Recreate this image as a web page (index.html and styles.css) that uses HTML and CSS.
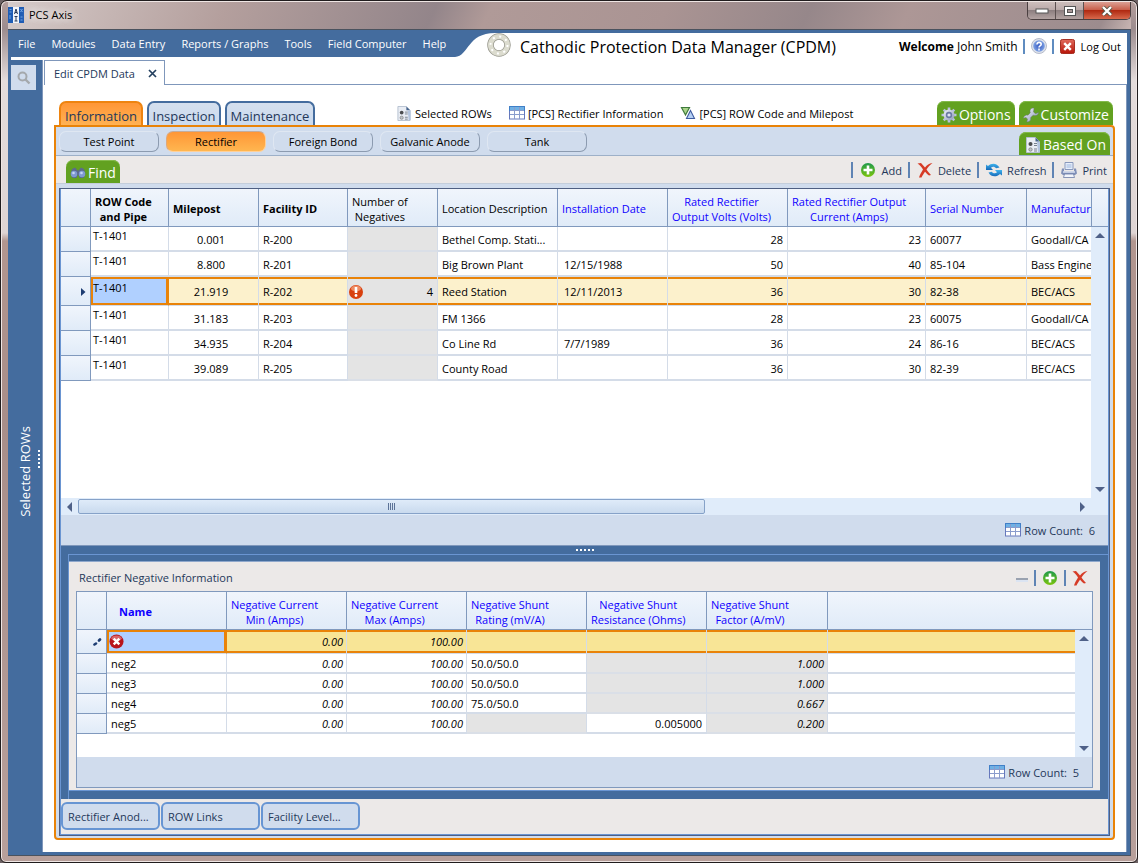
FILE: index.html
```html
<!DOCTYPE html>
<html lang="en">
<head>
<meta charset="utf-8">
<title>PCS Axis</title>
<link rel="stylesheet" href="styles.css">
</head>
<body>
<svg class="defs" aria-hidden="true">
  <defs>
    <linearGradient id="g-green" x1="0" y1="0" x2="0" y2="1"><stop offset="0" stop-color="#1f9a4c"/><stop offset="1" stop-color="#7cc40c"/></linearGradient>
    <linearGradient id="g-blue" x1="0" y1="0" x2="0" y2="1"><stop offset="0" stop-color="#3fb4ee"/><stop offset="1" stop-color="#1568b8"/></linearGradient>
    <linearGradient id="g-steel" x1="0" y1="0" x2="1" y2="1"><stop offset="0" stop-color="#f2f4fa"/><stop offset="1" stop-color="#8c98b8"/></linearGradient>
    <linearGradient id="g-red" x1="0" y1="0" x2="0" y2="1"><stop offset="0" stop-color="#e06a5c"/><stop offset="1" stop-color="#b81408"/></linearGradient>
    <radialGradient id="g-help"><stop offset="0" stop-color="#3558c0"/><stop offset="1" stop-color="#7ea2e4"/></radialGradient>
  </defs>
  <symbol id="i-table" viewBox="0 0 16 14"><rect x=".5" y=".5" width="15" height="12.500" fill="#fff" stroke="#6678bc"/><rect x="1" y="1" width="14" height="3.500" fill="#6fb0e4"/><path d="M1 4.500h14M1 8.500h14M5.500 1v12M10.500 1v12" stroke="#8a9ccc" fill="none"/><path d="M.5 5V.5h15V5" stroke="#3f80c8" fill="none"/></symbol>
  <symbol id="i-doc" viewBox="0 0 16 16"><path d="M1.500 .5h9l4 4v11h-13z" fill="#e9edf4" stroke="#b4bfd0"/><path d="M10.500 .5v4h4z" fill="#46648c"/><path d="M12 5h3v10h-2z" fill="#b2c4de"/><circle cx="5.500" cy="7" r="2" fill="#4a4c4e"/><circle cx="5.500" cy="12.500" r="1.700" fill="#bfc4c8" stroke="#777" stroke-width=".7"/><path d="M9 6.500h3M9 8.500h3M9 12h3M9 14h3" stroke="#78828e"/></symbol>
  <symbol id="i-tri" viewBox="0 0 16 14"><path d="M1.500 1.500h8L5.500 9z" fill="#a9d48a" stroke="#3f7a3c" stroke-width="1.200"/><path d="M10.500 4.500L14.500 12.500H6.500z" fill="#b6d0f4" stroke="#3f5ca0" stroke-width="1.100"/></symbol>
  <symbol id="i-gear" viewBox="0 0 16 16"><path d="M8 .5v15M.5 8h15M2.700 2.700l10.600 10.600M13.300 2.700L2.700 13.300" stroke="#b9c2dc" stroke-width="2.600"/><circle cx="8" cy="8" r="5.500" fill="url(#g-steel)"/><circle cx="8" cy="8" r="3.200" fill="#6b7aa4"/><circle cx="8" cy="8" r="1.600" fill="#dfe4f2"/></symbol>
  <symbol id="i-wrench" viewBox="0 0 16 16"><path d="M15.500 5.500l-3 1.200-2-1.700.6-3.800C8 .5 6.300 3 7.300 5.700L5 8.200C3 7.500.5 9 .5 11.300l2.300-.9 1.700 1.500-.7 3c2.800.3 4.500-1.700 3.900-4.400L10.200 8.200c3 .9 5.300-.3 5.300-2.700z" fill="url(#g-steel)" stroke="#68766a" stroke-width=".5"/></symbol>
  <symbol id="i-find" viewBox="0 0 16 12"><path d="M2 2l3-1.500 2.500 3h1L11 .5 14 2l1.500 5-2 4h-4L8 7.500 6.500 11h-4L.5 7z" fill="#5b6a8e"/><circle cx="4" cy="7" r="3.200" fill="#7f9ad2"/><circle cx="12" cy="7" r="3.200" fill="#7f9ad2"/><circle cx="3.500" cy="6" r="1.300" fill="#c6d6f4"/><circle cx="11.500" cy="6" r="1.300" fill="#c6d6f4"/></symbol>
  <symbol id="i-add" viewBox="0 0 16 16"><circle cx="8" cy="8" r="7" fill="url(#g-green)"/><path d="M8 3.500v9M3.500 8h9" stroke="#fff" stroke-width="2.600"/></symbol>
  <symbol id="i-del" viewBox="0 0 16 16"><path d="M.5 1.500L4 1c1.500 1.500 2.500 3 4 4.500C10 3 12 1.500 15.500 1 13 2.800 11 5 9.500 7.500c1.500 2 2.500 3.500 4.500 5.500l-2 .5C10 12 9 10.800 8 9.800 6.500 12 5.500 13.500 4.500 15.500H2C3 12.500 4.500 10 6 7.500 4.500 5 3 3 .5 1.500z" fill="#d63b26"/></symbol>
  <symbol id="i-refresh" viewBox="0 0 16 16"><path d="M0 2.500l2 1.500C5.500.5 11 .8 13.500 5.500l-3.200 .8C8.500 4.300 6.500 4.300 5 5.700L7 8H0z" fill="url(#g-blue)"/><path d="M16 13.500l-2-1.500C10.500 15.500 5 15.200 2.500 10.500l3.200-.8c1.800 2 3.800 2 5.300.6L9 8h7z" fill="url(#g-blue)"/></symbol>
  <symbol id="i-print" viewBox="0 0 16 16"><path d="M4 .5h8v7H4z" fill="#e7eefa" stroke="#8898bc"/><path d="M1 6.500h2v3h10v-3h2l1 5-2 1.500H2L0 11.500z" fill="#8090b8"/><path d="M2 10h12" stroke="#d9e0f0" stroke-width="1.500"/><path d="M3.500 12h9l1 3.500h-11z" fill="#f1f4fb" stroke="#6c7ca6" stroke-width=".8"/><path d="M5.500 3h5M5.500 5h5" stroke="#9db6de"/></symbol>
  <symbol id="i-search" viewBox="0 0 14 14"><circle cx="5.500" cy="5.500" r="4" fill="none" stroke="#a4a8ac" stroke-width="2"/><path d="M8.500 8.500l4 4" stroke="#a4a8ac" stroke-width="2.400"/></symbol>
</svg>

<div class="window">
  <header class="titlebar">
    <svg class="app-icon" viewBox="0 0 16 16" aria-hidden="true"><rect width="16" height="16" fill="#1f5cb4"/><rect x="5" width="6" height="16" fill="#f3f6fb"/><path d="M1.500 2.500h2M1.500 5h2M2 8v4M12.500 2l2 3M14.500 2l-2 3M12.500 10h2M12.500 13h2" stroke="#6fa4e4"/><path d="M6.500 7L8 2l1.500 5M7 5.500h2M8 9v5M6.500 9.500h3M6.500 14h3" stroke="#2a3c5c" fill="none"/></svg>
    <span class="app-name">PCS Axis</span>
    <div class="win-buttons">
      <button class="win-btn" aria-label="Minimize"><svg width="14" height="8" viewBox="0 0 14 8"><rect x="1" y="2" width="12" height="4" fill="#fff" stroke="#555"/></svg></button>
      <button class="win-btn" aria-label="Maximize"><svg width="12" height="10" viewBox="0 0 12 10"><rect x=".5" y=".5" width="11" height="9" fill="#fff" stroke="#555"/><rect x="3.500" y="3.500" width="5" height="3" fill="#a99" stroke="#555"/></svg></button>
      <button class="win-btn win-close" aria-label="Close"><svg width="12" height="10" viewBox="0 0 12 10"><path d="M2 1l8 8M10 1L2 9" stroke="#554" stroke-width="4"/><path d="M2 1l8 8M10 1L2 9" stroke="#fff" stroke-width="2.400"/></svg></button>
    </div>
  </header>

  <div class="client">
    <div class="masthead">
      <nav class="menu">
        <a href="#">File</a><a href="#">Modules</a><a href="#">Data Entry</a><a href="#">Reports / Graphs</a><a href="#">Tools</a><a href="#">Field Computer</a><a href="#">Help</a>
      </nav>
      <svg class="swoosh" viewBox="0 0 40 24" aria-hidden="true"><path d="M0 0h40C12 0 14 23 0 24z" fill="#446c9e"/></svg>
      <svg class="ring" viewBox="0 0 24 24" aria-hidden="true"><circle cx="12" cy="12" r="8.500" fill="none" stroke="#96968c" stroke-width="6.500"/><circle cx="12" cy="12" r="8.500" fill="none" stroke="#dcdccf" stroke-width="5"/><circle cx="12" cy="12" r="8.500" fill="none" stroke="#fff" stroke-width="2" stroke-dasharray="2 4.675"/></svg>
      <h1>Cathodic Protection Data Manager (CPDM)</h1>
      <div class="account">
        <span><b>Welcome</b> John Smith</span>
        <button class="help" aria-label="Help"><svg width="16" height="16" viewBox="0 0 16 16"><circle cx="8" cy="8" r="7.500" fill="#dfe3ec" stroke="#b6bccb"/><circle cx="8" cy="8" r="5.800" fill="url(#g-help)"/><path d="M6 6.500c0-3 4.200-2.600 4.200-.2C10.200 8 8 7.800 8 9.500M8 10.500v2" fill="none" stroke="#fff" stroke-width="1.600"/></svg></button>
        <button class="logout"><svg width="15" height="15" viewBox="0 0 16 16"><rect x=".5" y=".5" width="15" height="15" rx="2" fill="url(#g-red)" stroke="#a02418"/><path d="M4.500 4.500l7 7M11.500 4.500l-7 7" stroke="#fff" stroke-width="2.600"/></svg>Log Out</button>
      </div>
    </div>

    <div class="workspace">
      <aside class="sidebar">
        <button class="side-search" aria-label="Search"><svg width="14" height="14"><use href="#i-search"/></svg></button>
        <div class="side-label"><span class="vertical">Selected ROWs</span><i class="grip-v"></i></div>
      </aside>

      <main class="document">
        <div class="doc-tabs">
          <div class="doc-tab">Edit CPDM Data <button aria-label="Close tab"><svg width="9" height="9" viewBox="0 0 9 9"><path d="M1 1l7 7M8 1L1 8" stroke="#24405f" stroke-width="1.700"/></svg></button></div>
          <div class="doc-line"></div>
        </div>
        <div class="doc-page">
          <div class="section-tabs">
            <button class="stab active w84">Information</button>
            <button class="stab w74">Inspection</button>
            <button class="stab w90">Maintenance</button>
            <div class="filters">
              <a href="#"><svg width="16" height="15"><use href="#i-doc"/></svg>Selected ROWs</a>
              <a href="#"><svg width="16" height="14"><use href="#i-table"/></svg>[PCS] Rectifier Information</a>
              <a href="#"><svg width="16" height="14"><use href="#i-tri"/></svg>[PCS] ROW Code and Milepost</a>
            </div>
            <button class="gtab"><svg width="16" height="16"><use href="#i-gear"/></svg>Options</button>
            <button class="gtab"><svg width="16" height="16"><use href="#i-wrench"/></svg>Customize</button>
          </div>

          <div class="panel">
            <div class="sub-tabs">
              <button class="pill">Test Point</button>
              <button class="pill active">Rectifier</button>
              <button class="pill">Foreign Bond</button>
              <button class="pill">Galvanic Anode</button>
              <button class="pill">Tank</button>
              <button class="gtab based"><svg width="16" height="16"><use href="#i-doc"/></svg>Based On</button>
            </div>
            <div class="toolbar">
              <button class="gtab find"><svg width="16" height="12"><use href="#i-find"/></svg>Find</button>
              <div class="actions">
                <button><svg width="16" height="16"><use href="#i-add"/></svg>Add</button>
                <button><svg width="16" height="16"><use href="#i-del"/></svg>Delete</button>
                <button><svg width="16" height="16"><use href="#i-refresh"/></svg>Refresh</button>
                <button><svg width="16" height="16"><use href="#i-print"/></svg>Print</button>
              </div>
            </div>

            <div class="frame"><div class="frame-inner">
              <section class="grid main-grid">
                <div class="grid-view">
                  <div class="grid-clip">
                    <table class="data">
                      <colgroup><col class="c30"><col class="c78"><col class="c90"><col class="c89"><col class="c90"><col class="c120"><col class="c110"><col class="c120"><col class="c138"><col class="c101"><col></colgroup>
                      <thead><tr><th></th><th class="b"><span>ROW Code<br>and Pipe</span></th><th class="b">Milepost</th><th class="b">Facility ID</th><th><span>Number of<br>Negatives</span></th><th>Location Description</th><th class="opt">Installation Date</th><th class="opt"><span>Rated Rectifier<br>Output Volts (Volts)</span></th><th class="opt"><span>Rated Rectifier Output<br>Current (Amps)</span></th><th class="opt">Serial Number</th><th class="opt last">Manufactur</th></tr></thead>
                      <tbody>
                        <tr><th></th><td class="top">T-1401</td><td class="mp">0.001</td><td>R-200</td><td class="off"></td><td>Bethel Comp. Stati...</td><td></td><td class="num">28</td><td class="num">23</td><td class="tight">60077</td><td class="last">Goodall/CA</td></tr>
                        <tr><th></th><td class="top">T-1401</td><td class="mp">8.800</td><td>R-201</td><td class="off"></td><td>Big Brown Plant</td><td class="date">12/15/1988</td><td class="num">50</td><td class="num">40</td><td class="tight">85-104</td><td class="last">Bass Engine</td></tr>
                        <tr class="sel"><th><svg width="5" height="8" viewBox="0 0 5 8"><path d="M0 0l4.500 4L0 8z" fill="#1d3d72"/></svg></th><td class="top cur">T-1401</td><td class="mp">21.919</td><td>R-202</td><td class="off num"><div class="warn"><svg width="16" height="16" viewBox="0 0 16 16"><circle cx="8" cy="8" r="7" fill="#d8400e"/><ellipse cx="8" cy="4.500" rx="5" ry="3" fill="#ee8a62"/><path d="M8 3v6" stroke="#fff" stroke-width="2.600"/><circle cx="8" cy="11.500" r="1.400" fill="#fff"/></svg><span>4</span></div></td><td>Reed Station</td><td class="date">12/11/2013</td><td class="num">36</td><td class="num">30</td><td class="tight">82-38</td><td class="last">BEC/ACS</td></tr>
                        <tr><th></th><td class="top">T-1401</td><td class="mp">31.183</td><td>R-203</td><td class="off"></td><td>FM 1366</td><td></td><td class="num">28</td><td class="num">23</td><td class="tight">60075</td><td class="last">Goodall/CA</td></tr>
                        <tr><th></th><td class="top">T-1401</td><td class="mp">34.935</td><td>R-204</td><td class="off"></td><td>Co Line Rd</td><td class="date">7/7/1989</td><td class="num">36</td><td class="num">24</td><td class="tight">86-16</td><td class="last">BEC/ACS</td></tr>
                        <tr><th></th><td class="top">T-1401</td><td class="mp">39.089</td><td>R-205</td><td class="off"></td><td>County Road</td><td></td><td class="num">36</td><td class="num">30</td><td class="tight">82-39</td><td class="last">BEC/ACS</td></tr>
                      </tbody>
                    </table>
                  </div>
                  <div class="vside"><div class="corner"></div><div class="vscroll"><i class="arr up"></i><i class="arr down"></i></div></div>
                </div>
                <div class="hscroll"><i class="arr left"></i><div class="track"><div class="thumb"><i></i></div></div><i class="arr right"></i></div>
                <footer class="count"><svg width="16" height="14"><use href="#i-table"/></svg>Row Count: &nbsp;6</footer>
              </section>

              <div class="splitter"><i></i></div>

              <div class="detail-wrap"><section class="detail">
                <div class="detail-head">
                  <h2>Rectifier Negative Information</h2>
                  <div class="detail-tools">
                    <button aria-label="Collapse"><svg width="12" height="16" viewBox="0 0 12 16"><path d="M0 9h12" stroke="#9aa2b0" stroke-width="2"/><path d="M0 11h12" stroke="#dbe4f2" stroke-width="2"/></svg></button>
                    <button aria-label="Add"><svg width="16" height="16"><use href="#i-add"/></svg></button>
                    <button aria-label="Delete"><svg width="16" height="16"><use href="#i-del"/></svg></button>
                  </div>
                </div>
                <div class="grid sub-grid">
                  <div class="sub-view">
                    <div class="grid-clip">
                      <table class="data small">
                        <colgroup><col class="c30"><col class="c120"><col class="c120"><col class="c120"><col class="c120"><col class="c120"><col class="c121"><col></colgroup>
                        <thead><tr><th></th><th class="b opt name">Name</th><th class="opt"><span>Negative Current<br>Min (Amps)</span></th><th class="opt"><span>Negative Current<br>Max (Amps)</span></th><th class="opt"><span>Negative Shunt<br>Rating (mV/A)</span></th><th class="opt"><span>Negative Shunt<br>Resistance (Ohms)</span></th><th class="opt"><span>Negative Shunt<br>Factor (A/mV)</span></th><th class="fill"></th></tr></thead>
                        <tbody>
                          <tr class="sel edit"><th><svg width="9" height="9" viewBox="0 0 9 9"><path d="M1.500 7.500l1.500-1M6 3.500l1-1" stroke="#1d3d72" stroke-width="2.600" stroke-linecap="round"/></svg></th><td class="cur err"><svg width="15" height="15" viewBox="0 0 16 16"><circle cx="8" cy="8" r="7.500" fill="#b8141c"/><ellipse cx="8" cy="4.500" rx="5.500" ry="3" fill="#d8646a"/><path d="M5 5l6 6M11 5l-6 6" stroke="#fff" stroke-width="2.600"/></svg></td><td class="num it">0.00</td><td class="num it">100.00</td><td></td><td></td><td></td><td class="fill"></td></tr>
                          <tr><th></th><td>neg2</td><td class="num it">0.00</td><td class="num it">100.00</td><td class="tight">50.0/50.0</td><td class="off"></td><td class="off num it">1.000</td><td class="fill"></td></tr>
                          <tr><th></th><td>neg3</td><td class="num it">0.00</td><td class="num it">100.00</td><td class="tight">50.0/50.0</td><td class="off"></td><td class="off num it">1.000</td><td class="fill"></td></tr>
                          <tr><th></th><td>neg4</td><td class="num it">0.00</td><td class="num it">100.00</td><td class="tight">75.0/50.0</td><td class="off"></td><td class="off num it">0.667</td><td class="fill"></td></tr>
                          <tr><th></th><td>neg5</td><td class="num it">0.00</td><td class="num it">100.00</td><td class="off"></td><td class="num">0.005000</td><td class="off num it">0.200</td><td class="fill"></td></tr>
                        </tbody>
                      </table>
                    </div>
                    <div class="vside"><div class="corner plain"></div><div class="vscroll"><i class="arr up"></i><i class="arr down"></i></div></div>
                  </div>
                  <footer class="count"><svg width="16" height="14"><use href="#i-table"/></svg>Row Count: &nbsp;5</footer>
                </div>
              </section></div>

              <div class="bottom-tabs">
                <button>Rectifier Anod...</button>
                <button>ROW Links</button>
                <button>Facility Level...</button>
              </div>
            </div></div>
          </div>
        </div>
      </main>
    </div>
  </div>
</div>
</body>
</html>
```

FILE: styles.css
```css
:root {
  --blue: #446c9e;
  --line: #8099bd;
  --pale: #d0dced;
  --orange: #e98308;
  --ink: #24385a;
  --grey: #ece9e8;
  --green: #62a120;
  --scroll: #e0ecfa;
}

* { box-sizing: border-box; }

body {
  margin: 0;
  font: 11px/15px "Open Sans", "Noto Sans", sans-serif;
  color: #000;
  background: #6d6264;
}

button {
  font: inherit;
  color: inherit;
  background: none;
  border: 0;
  padding: 0;
  display: flex;
  align-items: center;
  justify-content: center;
}

a { color: inherit; text-decoration: none; }
svg { flex: none; display: block; }
.defs { position: absolute; width: 0; height: 0; }

/* Window chrome */
.window {
  min-height: 100vh;
  display: flex;
  flex-direction: column;
  padding: 0 6px 6px 7px;
  border: 1px solid #201c1d;
  border-radius: 7px 7px 6px 6px;
  background: linear-gradient(180deg, #b49e9c 0, #9c8c8e 28px, #e4dcdb 80px, #ded4d3 232px, #b2968f 240px, #a88e89 420px, #b8a09b 100%);
  box-shadow: inset 0 0 0 1px #efe6e4;
}

.titlebar {
  height: 28px;
  display: flex;
  align-items: flex-start;
  gap: 5px;
  background: linear-gradient(115deg, #d6cccb 0, #cbbdbb 60px, #b49f9d 200px, #93858a 390px, #b09a98 440px, #aa9493 600px, #96878a 730px, #ad9796 820px, #9c8c8e 1000px, #c9b6b3 100%);
  margin-top: 1px;
  margin-bottom: -1px;
}
.app-icon { width: 16px; height: 16px; margin-top: 5px; }
.app-name { margin-top: 5px; text-shadow: 0 0 8px #fff, 0 0 8px #fff; }
.win-buttons {
  margin-left: auto;
  display: flex;
  border: 1px solid #4a3f40;
  border-top: 0;
  border-radius: 0 0 5px 5px;
  overflow: hidden;
}
.win-btn {
  width: 28px;
  height: 17px;
  border-right: 1px solid #5b5050;
  background: linear-gradient(#cdbebc, #b8a7a6 50%, #8d7f80 50%, #b3a3a2);
}
.win-close { width: 46px; border-right: 0; background: linear-gradient(#dca094, #c9604c 45%, #b02a12 50%, #d8694c); }

.client {
  flex: 1;
  display: flex;
  flex-direction: column;
  background: var(--blue);
  padding: 3px 3px 3px 0;
  border: 1px solid #4a525e;
  border-width: 1px 1px 1px 0;
}

.masthead {
  display: flex;
  height: 27px;
  margin-left: 3px;
  background: #fff;
}
.menu {
  display: flex;
  align-items: center;
  gap: 16px;
  height: 24px;
  width: 444px;
  padding: 0 0 3px 7px;
  background: var(--blue);
  color: #fff;
  white-space: nowrap;
}
.swoosh { width: 40px; height: 24px; }
.ring { width: 24px; height: 24px; margin-left: -8px; }
.masthead h1 { margin: 4px 0 0 9px; font-size: 16px; line-height: 20px; font-weight: 400; white-space: nowrap; }
.account { margin-left: auto; display: flex; align-items: center; height: 26px; padding-right: 6px; white-space: nowrap; }
.account span { font-size: 12px; }
.account button { border-left: 2px solid #5f8cc0; height: 15px; padding-left: 6px; margin-left: 5px; }
.account .logout { gap: 6px; }

.workspace { flex: 1; display: flex; }
.sidebar { width: 35px; display: flex; flex-direction: column; padding: 5px 0 0 3px; border-right: 1px solid #7f97bb; color: #fff; }
.side-search { width: 25px; height: 25px; background: var(--pale); }
.side-label { flex: 1; display: flex; align-items: center; padding-left: 6px; gap: 4px; }
.vertical { writing-mode: vertical-rl; transform: rotate(180deg); font-size: 13px; line-height: 17px; }
.grip-v { width: 2px; height: 19px; margin-bottom: 24px; background: repeating-linear-gradient(#fff 0 2px, transparent 2px 4px); }

/* Document */
.document { flex: 1; min-width: 0; display: flex; flex-direction: column; background: #fff; }
.doc-tabs { display: flex; height: 25px; padding-left: 1px; }
.doc-tab {
  width: 121px;
  display: flex;
  align-items: center;
  justify-content: space-between;
  padding: 0 7px 0 9px;
  border: 1px solid #7f97bb;
  border-bottom: 0;
  color: var(--ink);
}
.doc-line { flex: 1; border-bottom: 1px solid #7f97bb; }
.doc-page { flex: 1; display: flex; flex-direction: column; padding: 16px 11px 12px; border-right: 1px solid #7f97bb; }

.section-tabs { display: flex; gap: 4px; height: 24px; padding: 0 2px 0 5px; }
.stab {
  border: 2px solid #446c9e;
  border-bottom: 0;
  border-radius: 7px 7px 0 0;
  background: linear-gradient(#d4dfee, #cbdaee);
  color: var(--ink);
  font-size: 13px;
  line-height: 20px;
  padding-top: 3px;
  white-space: nowrap;
}
.stab.active { border-color: #ee8410; background: linear-gradient(#ff9636, #ffb254); }
.w84 { width: 84px; }
.w74 { width: 74px; }
.w90 { width: 90px; }
.filters { display: flex; flex: 1; gap: 17px; padding-left: 77px; white-space: nowrap; }
.filters a { display: flex; align-items: center; gap: 3px; }
.gtab {
  display: flex;
  gap: 2px;
  padding: 3px 4px 0;
  border-radius: 7px 7px 0 0;
  background: var(--green);
  box-shadow: inset 0 1px 0 #84bb4c;
  color: #fff;
  font-size: 14px;
  line-height: 20px;
  white-space: nowrap;
}

.panel {
  flex: 1;
  display: flex;
  flex-direction: column;
  border: 2px solid var(--orange);
  border-radius: 0 4px 4px 4px;
  background: var(--pale);
  padding-bottom: 2px;
}
.sub-tabs { display: flex; gap: 7px; height: 29px; padding: 4px 3px 0; border-bottom: 1px solid #9db0c8; }
.pill {
  width: 100px;
  height: 21px;
  border: 1px solid #dfe7f2;
  border-right-color: #8c9bb0;
  border-bottom-color: #8c9bb0;
  border-radius: 7px;
}
.pill.active { background: linear-gradient(#ff9636, #ffb650); border-color: #c4ac9c #ffd098 #ffd098 #e0a878; }
.based { margin: 1px 0 0 auto; padding: 2px 4px 0 6px; }

.toolbar { display: flex; justify-content: space-between; height: 28px; padding: 4px 6px 0 10px; background: var(--grey); border-bottom: 1px solid #c4cedb; }
.find { padding: 2px 4px 0; }
.actions { display: flex; align-items: center; height: 20px; gap: 6px; color: var(--ink); }
.actions button { height: 16px; gap: 5px; padding-left: 7px; border-left: 2px solid #5f84b4; }

.frame { flex: 1; display: flex; margin: 4px 3px 0; border: 1px solid #4f5f82; }
.frame-inner { flex: 1; min-width: 0; display: flex; flex-direction: column; border: 1px solid #6a95d2; border-top: 0; background: var(--blue); }

/* Data grids */
.grid { display: flex; flex-direction: column; background: #fff; }
.main-grid { flex: 1; border-bottom: 1px solid #7f97bb; }
.grid-view { flex: 1; display: flex; min-height: 0; }
.sub-view { display: flex; min-height: 165px; }
.grid-clip { flex: 1; min-width: 0; overflow: hidden; }
.data { width: 100%; table-layout: fixed; border-collapse: separate; border-spacing: 0; }
.c30 { width: 30px; }
.c78 { width: 78px; }
.c89 { width: 89px; }
.c90 { width: 90px; }
.c101 { width: 101px; }
.c110 { width: 110px; }
.c120 { width: 120px; }
.c121 { width: 121px; }
.c138 { width: 138px; }

.data th, .data td {
  height: 25px;
  padding: 1px 4px 0;
  white-space: nowrap;
  text-align: left;
  font-weight: 400;
  border-right: 1px solid #d4dce8;
  border-bottom: 2px solid #d4dce8;
}
.data th {
  border-right: 1px solid var(--line);
  border-bottom: 1px solid var(--line);
  background: linear-gradient(#f0f5fc, #e0ebf8);
}
.data thead th { height: 38px; padding: 2px 4px 0; }
.data thead span { display: inline-block; text-align: center; vertical-align: top; }
.data thead .b { font-weight: 700; }
.data .opt { color: #0f00ff; }
.data thead .name { padding-left: 12px; }
.data .last { border-right: 0; }
.data td.top { vertical-align: top; padding: 1px 2px 0; }
.data td.mp { text-align: center; padding-right: 9px; }
.data td.num { text-align: right; }
.data td.off { background: #e4e4e4; border-bottom-color: #dadfe7; }
.data td.date { padding-left: 6px; }
.data td.it { font-style: italic; padding-right: 3px; }
.data .sel th svg { margin-left: auto; }
.data .sel td {
  height: 29px;
  background: #fcf1cc;
  border-bottom-width: 1px;
  box-shadow: inset 0 2px var(--orange), inset 0 -2px var(--orange);
}
.data .sel td.cur { background: #b0d0ff; border-right-color: var(--orange); box-shadow: inset 0 0 0 2px var(--orange); padding-top: 3px; }
.data .sel td.off { background: #e4e4e4; padding-left: 0; }
.warn { display: flex; justify-content: space-between; align-items: center; }

.small tbody th, .small td { height: 20px; padding-top: 0; }
.small .sel td { height: 24px; background: #f8e596; }
.data .sel td.err { padding: 0 2px; }
.small .fill { border-right: 0; }

.vside { width: 17px; display: flex; flex-direction: column; }
.corner { height: 38px; border-left: 1px solid var(--line); border-bottom: 1px solid var(--line); background: linear-gradient(#f0f5fc, #e0ebf8); }
.corner.plain { border-left: 0; }
.vscroll { flex: 1; display: flex; flex-direction: column; align-items: center; justify-content: space-between; padding: 6px 0; background: var(--scroll); }
.arr { width: 0; height: 0; border: 5px solid transparent; }
.arr.up { border-top: 0; border-bottom-color: #4f6188; }
.arr.down { border-bottom: 0; border-top-color: #4f6188; }
.arr.left { border-left: 0; border-right-color: #4f6188; }
.arr.right { border-right: 0; border-left-color: #4f6188; }
.hscroll { display: flex; align-items: center; gap: 6px; height: 17px; padding: 0 23px 0 6px; background: var(--scroll); }
.track { flex: 1; }
.thumb {
  width: 63%;
  height: 15px;
  display: flex;
  align-items: center;
  justify-content: center;
  border: 1px solid #86a2c8;
  border-radius: 2px;
  background: linear-gradient(#dfebf9, #c9daee);
}
.thumb i { width: 8px; height: 7px; background: repeating-linear-gradient(90deg, #5c7398 0 1px, transparent 1px 2px); }
.count {
  display: flex;
  align-items: center;
  justify-content: flex-end;
  gap: 3px;
  height: 30px;
  padding-right: 13px;
  background: var(--pale);
  color: var(--ink);
}

.splitter { height: 8px; display: flex; justify-content: center; align-items: center; }
.splitter i { width: 18px; height: 2px; background: repeating-linear-gradient(90deg, #fff 0 2px, transparent 2px 4px); }

.detail-wrap { margin-left: 7px; padding: 6px 8px 8px 0; border: 1px solid #6a95d2; border-bottom: 0; border-right: 0; }
.detail { padding: 0 7px 2px; background: var(--grey); border-top: 1px solid #8fa8cc; border-bottom: 1px solid #6a95d2; }
.detail-head { display: flex; justify-content: space-between; align-items: center; height: 29px; padding: 2px 5px 0 3px; color: var(--ink); }
.detail-head h2 { margin: 0; font-size: 11px; font-weight: 400; }
.detail-tools { display: flex; gap: 6px; }
.detail-tools button + button { padding-left: 6px; border-left: 2px solid #5f84b4; }
.sub-grid { border: 1px solid var(--line); }

.bottom-tabs { display: flex; gap: 1px; height: 35px; padding: 3px 0; background: var(--grey); }
.bottom-tabs button {
  width: 99px;
  height: 28px;
  justify-content: flex-start;
  padding-left: 5px;
  border: 2px solid #6795d3;
  border-radius: 6px;
  background: var(--pale);
  color: var(--ink);
  white-space: nowrap;
}
```
